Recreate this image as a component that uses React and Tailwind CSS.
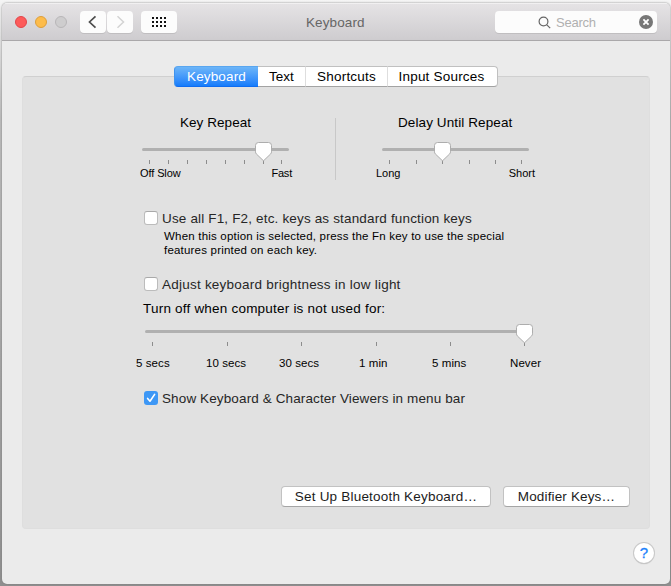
import React from "react";

const TITLE = "text-[13.5px] leading-4 whitespace-nowrap";
const SMALL = "text-[11px] leading-[14px] whitespace-nowrap";

/* Slider track with tick marks and a pentagonal thumb */
function Slider({ width, end, ticks, value, className = "" }) {
  return (
    <svg className={`block shrink-0 ${className}`} width={width} height="24" viewBox={`0 0 ${width} 24`}>
      <rect x="0" y="7" width={end} height="3" rx="1.5" fill="#b0b0b0" />
      {ticks.map((x) => (
        <rect key={x} x={x} y="19" width="1" height="4" fill="#8c8c8c" />
      ))}
      <g transform={`translate(${value - 8} 1)`}>
        <path
          d="M3.5 0.5H13.5Q16.5 0.5 16.5 3.5V9.8Q16.5 11 15.7 11.9L8.5 18.8L1.3 11.9Q0.5 11 0.5 9.8V3.5Q0.5 0.5 3.5 0.5Z"
          fill="#fff"
          stroke="#adadad"
          strokeWidth="1"
        />
      </g>
    </svg>
  );
}

function Checkbox({ checked, children, spacing }) {
  return (
    <label className="flex h-[14px] items-center gap-1">
      {checked ? (
        <span className="flex size-[14px] items-center justify-center rounded-[3px] bg-[#3d97f5]">
          <svg width="14" height="14" viewBox="0 0 14 14" fill="none">
            <path d="M3.6 7.4L6 10.2L10.6 3.4" stroke="#fff" strokeWidth="1.6" strokeLinecap="round" strokeLinejoin="round" />
          </svg>
        </span>
      ) : (
        <span className="size-[14px] rounded-[3px] border border-[#bcbcbc] border-t-[#a9a9a9] bg-white" />
      )}
      <span className={`pt-0.5 text-[13.5px] leading-4 whitespace-nowrap text-[#262626] ${spacing}`}>{children}</span>
    </label>
  );
}

function PushButton({ children, className }) {
  return (
    <button
      className={`flex h-[21px] items-center justify-center rounded-[4px] border border-[#c2c2c2] border-b-[#a5a5a5] bg-white text-[13.5px] leading-4 whitespace-nowrap text-[#1c1c1c] ${className}`}
    >
      {children}
    </button>
  );
}

function TitleBar() {
  return (
    <header className="flex h-[38px] shrink-0 items-center border-t border-b border-t-[#f1f0f1] border-b-[#aaa8aa] bg-linear-to-b from-[#e5e3e5] to-[#cecccf] pl-[13px]">
      <div className="flex gap-2">
        <span className="size-3 rounded-full border border-[#e2454a] bg-[#fd5b5a]" />
        <span className="size-3 rounded-full border border-[#dd9f3b] bg-[#fdbc4b]" />
        <span className="size-3 rounded-full border border-[#b8b6b8] bg-[#cecdce]" />
      </div>
      <div className="ml-[13px] flex gap-px">
        <button className="flex h-[22px] w-[26px] items-center justify-center rounded-[4px] bg-[#fcfcfc] shadow-[0_1px_0_#c0bec0]">
          <svg width="26" height="22" viewBox="0 0 26 22" fill="none">
            <path d="M15.5 5.3L9.5 11L15.5 16.7" stroke="#4c4c4c" strokeWidth="1.7" />
          </svg>
        </button>
        <button className="flex h-[22px] w-[26px] items-center justify-center rounded-[4px] bg-[#fcfcfc] shadow-[0_1px_0_#c0bec0]">
          <svg width="26" height="22" viewBox="0 0 26 22" fill="none">
            <path d="M10.5 5.3L16.5 11L10.5 16.7" stroke="#d3d3d3" strokeWidth="1.5" />
          </svg>
        </button>
      </div>
      <button className="ml-2 flex h-[22px] w-9 rounded-[4px] bg-[#fcfcfc] shadow-[0_1px_0_#c0bec0]">
        <svg width="36" height="22" viewBox="0 0 36 22" fill="#111">
          {[6, 10, 14].map((y) =>
            [11, 15, 19, 23].map((x) => <rect key={`${x}-${y}`} x={x} y={y} width="2" height="2" />)
          )}
        </svg>
      </button>
      <h1 className={`ml-[129px] w-[189px] pt-px tracking-[0.1px] text-[#666] ${TITLE}`}>Keyboard</h1>
      <div className="flex h-[22px] w-[162px] items-center rounded-[4px] bg-[#fcfcfc] pr-1 pl-[43px] shadow-[0_1px_0_#c0bec0]">
        <svg width="13" height="13" viewBox="0 0 13 13" fill="none" stroke="#666" strokeWidth="1.2">
          <circle cx="5.5" cy="5.5" r="4.4" />
          <path d="M8.8 8.8L12.2 12.2" />
        </svg>
        <span className="ml-[5px] pt-px text-[13px] leading-4 tracking-[-0.25px] text-[#b0b0b0]">Search</span>
        <svg className="ml-auto" width="14" height="14" viewBox="0 0 14 14">
          <circle cx="7" cy="7" r="7" fill="#777" />
          <path d="M4.4 4.4L9.6 9.6M9.6 4.4L4.4 9.6" stroke="#fff" strokeWidth="1.8" />
        </svg>
      </div>
    </header>
  );
}

function Tabs() {
  return (
    <nav className="-mt-[11px] ml-[151px] flex h-[21px] w-[324px] text-[13.5px] leading-4 text-black">
      <button className="flex w-[84px] items-center justify-center rounded-l-[4px] border border-r-0 border-[#3f93ee] border-t-[#59a6f0] border-b-[#0f6cf0] bg-linear-to-b from-[#6cb5f8] to-[#147cfb] tracking-[0.15px] text-white">
        Keyboard
      </button>
      <button className="flex w-12 items-center justify-center border-t border-r border-b border-[#c0c0c0] border-r-[#dedede] border-b-[#a3a3a3] bg-white">
        Text
      </button>
      <button className="flex w-[82px] items-center justify-center border-t border-r border-b border-[#c0c0c0] border-r-[#dedede] border-b-[#a3a3a3] bg-white tracking-[0.2px]">
        Shortcuts
      </button>
      <button className="flex w-[110px] items-center justify-center rounded-r-[4px] border border-l-0 border-[#c0c0c0] border-b-[#a3a3a3] bg-white pr-[2px] tracking-[0.2px]">
        Input Sources
      </button>
    </nav>
  );
}

export default function App() {
  return (
    <div className="h-[586px] w-[671px] overflow-hidden bg-linear-to-b from-[#f5f5f5] via-[#bcbcbc] via-20% to-[#8f8f8f] pt-[3px] pl-[2px] font-['Liberation_Sans',Arial,sans-serif]">
      <div className="flex h-[581px] w-[668px] flex-col overflow-hidden rounded-[5px] bg-[#ebebeb] shadow-[0_0_2px_#777]">
        <TitleBar />
        <main className="mx-5 mt-[35px] flex h-[453px] w-[628px] flex-col rounded-[4px] border border-[#dedede] border-t-[#d0d0d0] bg-[#e1e1e1] text-black">
          <Tabs />
          <section className="mt-7 flex">
            <div className="ml-[116px] w-[196px]">
              <h2 className={`ml-[41px] tracking-[0.05px] ${TITLE}`}>Key Repeat</h2>
              <Slider className="mt-[10px] ml-[3px]" width={150} end={147} ticks={[7, 26, 45, 64, 83, 102, 121, 139]} value={121} />
              <div className={`mt-[1px] ml-px flex justify-between ${SMALL}`}>
                <span className="tracking-[-0.1px]">Off Slow</span>
                <span className="mr-[43px] tracking-[-0.2px]">Fast</span>
              </div>
            </div>
            <div className="mt-[3px] h-[62px] w-px bg-[#c8c8c8]" />
            <div className="ml-10 w-[159px]">
              <h2 className={`ml-[22px] tracking-[0.1px] ${TITLE}`}>Delay Until Repeat</h2>
              <Slider className="mt-[10px] ml-[6px]" width={150} end={147} ticks={[7, 34, 60, 87, 113, 139]} value={60} />
              <div className={`mt-[1px] flex justify-between ${SMALL}`}>
                <span>Long</span>
                <span>Short</span>
              </div>
            </div>
          </section>
          <section className="mt-[31px] ml-[121px]">
            <Checkbox spacing="tracking-[0.16px]">Use all F1, F2, etc. keys as standard function keys</Checkbox>
            <p className="mt-1 ml-5 text-[11.5px] leading-[14px] tracking-[0.2px] whitespace-nowrap">
              When this option is selected, press the Fn key to use the special
              <br />
              features printed on each key.
            </p>
          </section>
          <section className="mt-5 ml-[121px]">
            <Checkbox spacing="tracking-[0.23px]">Adjust keyboard brightness in low light</Checkbox>
            <p className={`mt-[10px] -ml-px tracking-[0.21px] ${TITLE}`}>Turn off when computer is not used for:</p>
            <Slider className="mt-[6px] ml-[1px]" width={392} end={388} ticks={[7, 82, 156, 231, 305, 379]} value={379} />
            <div className="mt-[9px] -ml-2 flex text-[11.5px] leading-[14px] tracking-[0.08px] whitespace-nowrap">
              <span className="w-[70px]">5 secs</span>
              <span className="w-[73px]">10 secs</span>
              <span className="w-[80px]">30 secs</span>
              <span className="w-[73px]">1 min</span>
              <span className="w-[78px]">5 mins</span>
              <span>Never</span>
            </div>
          </section>
          <section className="mt-[21px] ml-[121px]">
            <Checkbox checked spacing="tracking-[0.12px]">Show Keyboard &amp; Character Viewers in menu bar</Checkbox>
          </section>
          <footer className="mt-[81px] flex justify-end gap-3 pr-[19px]">
            <PushButton className="w-[210px] tracking-[0.2px]">Set Up Bluetooth Keyboard…</PushButton>
            <PushButton className="w-[127px] tracking-[0.15px]">Modifier Keys…</PushButton>
          </footer>
        </main>
        <div className="mt-[14px] flex justify-end pr-4">
          <button className="flex size-5 items-center justify-center rounded-full bg-white text-[15px] leading-5 text-[#1c82fb] shadow-[0_0_0_1px_#c9c9c9,0_1px_1px_#999] [-webkit-text-stroke:0.3px_#1c82fb]">
            ?
          </button>
        </div>
      </div>
    </div>
  );
}
